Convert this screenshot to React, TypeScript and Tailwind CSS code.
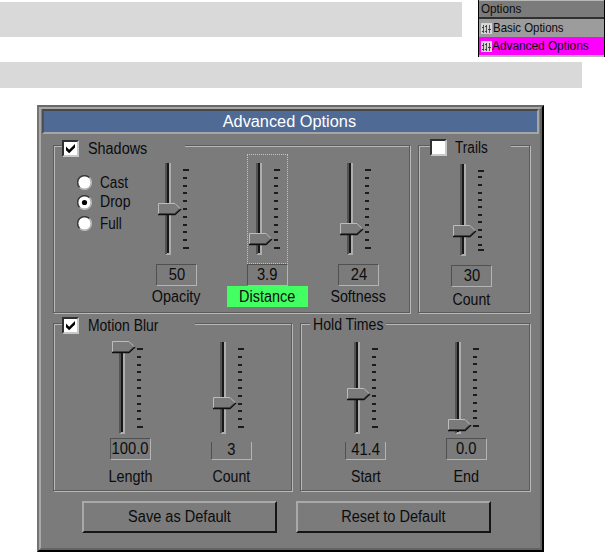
import type { ReactNode } from "react";
import clsx from "clsx";

const TICKS = [16, 24, 32, 39, 47, 55, 63, 71, 78, 86, 94];
const TRAIL_TICKS = [16, 22, 30, 38, 45, 52, 60, 67, 75, 82, 90, 95];
const END_TICKS = [16, 24, 31, 39, 47, 55, 62, 70, 78, 85, 93];

function Label({ children, className, small }: { children: ReactNode; className?: string; small?: boolean }) {
  return (
    <span
      className={clsx(
        "inline-block whitespace-pre",
        small ? "text-[13px] leading-4" : "text-[16px] leading-[18px]",
        className
      )}
    >
      {children}
    </span>
  );
}

function Slider({ thumb, ticks = TICKS }: { thumb: number; ticks?: number[] }) {
  return (
    <svg width="41" height="110" viewBox="0 0 41 110" shapeRendering="crispEdges" className="block shrink-0">
      <rect x="10" y="9" width="5" height="92" fill="#adadad" />
      <rect x="9" y="9" width="2" height="91" fill="#535353" />
      <rect x="11" y="9" width="2" height="90" fill="#181818" />
      {ticks.map((y, i) => {
        const end = i === 0 || i === ticks.length - 1;
        return <rect key={y} x={27} y={y - 1} width={end ? 6 : 4} height="1.5" fill="#1c1c1c" />;
      })}
      <g transform={`translate(2 ${thumb})`} shapeRendering="auto">
        <path d="M0 0H17L23 6L17 12H0Z" fill="#7b7b7b" />
        <path d="M.5 11V.5H17L22.5 6" fill="none" stroke="#bcbcbc" />
        <path d="M1 10.5H16.5L21.5 6" fill="none" stroke="#555" />
        <path d="M0 11.5H17L23 6" fill="none" stroke="#101010" strokeWidth="1.3" />
      </g>
    </svg>
  );
}

function Column({
  value,
  thumb,
  ticks,
  focused,
  clipped,
  short,
  className,
  children,
}: {
  value: string;
  thumb: number;
  ticks?: number[];
  focused?: boolean;
  clipped?: boolean;
  short?: boolean;
  className?: string;
  children: ReactNode;
}) {
  return (
    <div className={clsx("flex w-[91px] shrink-0 flex-col items-center", className)}>
      <div
        className={clsx(
          "w-[41px] shrink-0",
          short ? "h-[105px]" : "h-[110px]",
          focused && "outline outline-dotted outline-1 -outline-offset-1 outline-[#c4c4c4]"
        )}
      >
        <Slider thumb={thumb} ticks={ticks} />
      </div>
      <div
        className={clsx(
          "flex w-[41px] shrink-0 items-center justify-center border-r border-b border-l border-r-[#b4b4b4] border-b-[#b4b4b4] border-l-[#505050] bg-[#7b7b7b]",
          clipped ? "mt-1 h-[18px] pb-[2px]" : "h-[22px] border-t border-t-[#505050]"
        )}
      >
        <Label className="scale-x-[0.92]">{value}</Label>
      </div>
      {children}
    </div>
  );
}

function Group({ className, children }: { className?: string; children: ReactNode }) {
  return (
    <section
      className={clsx(
        "h-[168px] shrink-0 border border-[#5c5c5c] shadow-[1px_1px_0_#b8b8b8,inset_1px_1px_0_#b8b8b8]",
        className
      )}
    >
      {children}
    </section>
  );
}

function Check({ checked }: { checked?: boolean }) {
  return (
    <span className="flex size-[17px] shrink-0 items-center justify-center border-2 border-t-[#303030] border-r-[#c8c8c8] border-b-[#c8c8c8] border-l-[#303030] bg-white">
      {checked && (
        <svg width="11" height="11" viewBox="0 0 11 11">
          <path d="M1 3.5L4.2 6.8L10 1V4.5L4.2 10.3L1 7.2Z" fill="#000" />
        </svg>
      )}
    </span>
  );
}

function Radio({ checked, className, children }: { checked?: boolean; className: string; children: ReactNode }) {
  return (
    <label className={clsx("flex items-center gap-2", className)}>
      <svg width="15" height="15" viewBox="0 0 15 15" className="shrink-0">
        <circle cx="7.5" cy="7.5" r="6.3" fill="#fff" />
        <path d="M2.6 12.4A6.9 6.9 0 0 1 12.4 2.6" fill="none" stroke="#3a3a3a" strokeWidth="1.4" />
        <path d="M12.4 2.6A6.9 6.9 0 0 1 2.6 12.4" fill="none" stroke="#b4b4b4" strokeWidth="1.4" />
        {checked && <circle cx="7.5" cy="7.5" r="2.6" fill="#000" />}
      </svg>
      {children}
    </label>
  );
}

function MixerIcon() {
  return (
    <svg width="11" height="11" viewBox="0 0 11 11" shapeRendering="crispEdges" className="shrink-0">
      <rect width="11" height="11" fill="#d6d6d6" />
      <path d="M2.5 2V10M5.5 2V10M8.5 2V10" stroke="#555" />
      <path d="M1 4.5H3M4 3.5H6M7 6.5H10M1 8.5H3M4 8.5H6" stroke="#3c3c3c" />
    </svg>
  );
}

function PushButton({ children }: { children: ReactNode }) {
  return (
    <button className="flex h-8 w-[195px] items-center justify-center border-2 border-t-[#a9a9a9] border-r-[#151515] border-b-[#151515] border-l-[#a9a9a9] bg-[#7b7b7b]">
      {children}
    </button>
  );
}

function OptionsMenu() {
  return (
    <nav className="h-[57px] w-[127px] shrink-0 border-x border-black bg-[#b8b8b8] pt-px">
      <div className="flex h-[18px] items-center border-b-2 border-[#303030] bg-[#7b7b7b] pl-[2px]">
        <Label small className="origin-left scale-x-[0.9]">Options</Label>
      </div>
      <div className="flex h-[18px] items-center gap-px bg-[#9c9c9c] pl-[2px]">
        <MixerIcon />
        <Label small className="origin-left scale-x-[0.88]">Basic Options</Label>
      </div>
      <div className="flex h-[18px] w-[125px] items-center bg-[#ff00ff] pl-[2px]">
        <MixerIcon />
        <Label small className="origin-left scale-x-[0.91]">Advanced Options</Label>
      </div>
    </nav>
  );
}

export default function App() {
  return (
    <main className="h-[552px] w-[605px] overflow-hidden bg-white font-['Liberation_Sans',Arial,sans-serif] text-[#0c0c0c]">
      <div className="flex h-[62px] justify-between">
        <div className="mt-[2px] h-[35px] w-[462px] bg-[#d9d9d9]" />
        <OptionsMenu />
      </div>
      <div className="h-[26px] w-[582px] bg-[#d9d9d9]" />

      <div className="mt-[17px] ml-[37px] h-[447px] w-[507px] border-2 border-t-[#696969] border-r-black border-b-black border-l-[#747474] bg-[#7b7b7b]">
        <div className="h-[443px] border-2 border-t-[#a8a8a8] border-r-[#636363] border-b-[#636363] border-l-[#a8a8a8]">
          <div className="mx-px flex h-[25px] items-center justify-center border-2 border-t-[#484848] border-r-[#a5a5a5] border-b-[#a5a5a5] border-l-[#505050] bg-[#506a96] text-white">
            <Label className="scale-x-[1.02] pr-[2px]">Advanced Options</Label>
          </div>

          <div className="mt-[11px] ml-3 flex gap-2">
            <Group className="w-[357px]">
              <div className="-mt-[7px] ml-2 flex h-[18px] w-[123px] items-center gap-[9px] bg-[#7b7b7b]">
                <Check checked />
                <Label className="origin-left scale-x-90 pt-[2px]">Shadows</Label>
              </div>
              <div className="-mt-[3px] flex">
                <div className="w-[77px] shrink-0 pt-[19px] pl-[23px]">
                  <Radio className="h-[19px]">
                    <Label className="origin-left scale-x-[0.85]">Cast</Label>
                  </Radio>
                  <Radio checked className="h-5">
                    <Label className="origin-left scale-x-[0.88]">Drop</Label>
                  </Radio>
                  <Radio className="h-[23px]">
                    <Label className="origin-left scale-x-[0.84]">Full</Label>
                  </Radio>
                </div>
                <Column value="50" thumb={49}>
                  <Label className="mt-[2px] scale-x-90">Opacity</Label>
                </Column>
                <Column value="3.9" thumb={79} focused>
                  <div className="flex h-[21px] w-[81px] justify-center bg-[#42ff62] pt-[2px]">
                    <Label className="scale-x-90">Distance</Label>
                  </div>
                </Column>
                <Column value="24" thumb={69}>
                  <Label className="mt-[2px] scale-x-[0.89]">Softness</Label>
                </Column>
              </div>
            </Group>
            <Group className="w-[112px]">
              <div className="-mt-2 ml-[11px] flex h-[18px] w-[81px] items-center gap-2 bg-[#7b7b7b]">
                <Check />
                <Label className="origin-left scale-x-[0.85] pt-px">Trails</Label>
              </div>
              <div className="-mt-px flex">
                <Column value="30" thumb={70} ticks={TRAIL_TICKS} className="ml-[7px]">
                  <Label className="mt-1 scale-x-[0.88]">Count</Label>
                </Column>
              </div>
            </Group>
          </div>

          <div className="mt-[10px] ml-3 flex gap-2">
            <Group className="w-[239px]">
              <div className="-mt-2 ml-2 flex h-[18px] w-[133px] items-center gap-[9px] bg-[#7b7b7b]">
                <Check checked />
                <Label className="origin-left scale-x-[0.87] pt-px">Motion Blur</Label>
              </div>
              <div className="-mt-px flex pl-[31px]">
                <Column value="100.0" thumb={8} short>
                  <Label className="mt-2 scale-x-90">Length</Label>
                </Column>
                <Column value="3" thumb={64} short clipped className="ml-[10px]">
                  <Label className="mt-2 scale-x-[0.88]">Count</Label>
                </Column>
              </div>
            </Group>
            <Group className="w-[230px]">
              <div className="-mt-2 ml-[9px] flex h-[18px] w-[76px] bg-[#7b7b7b] pl-[3px]">
                <Label className="origin-left scale-x-[0.88]">Hold Times</Label>
              </div>
              <div className="-mt-px flex pl-[19px]">
                <Column value="41.4" thumb={55} short clipped>
                  <Label className="mt-2 scale-x-[0.88]">Start</Label>
                </Column>
                <Column value="0.0" thumb={86} ticks={END_TICKS} short className="ml-[10px]">
                  <Label className="mt-2 scale-x-90">End</Label>
                </Column>
              </div>
            </Group>
          </div>

          <div className="mt-[10px] ml-[41px] flex gap-[19px]">
            <PushButton>
              <Label className="scale-x-[0.91]">Save as Default</Label>
            </PushButton>
            <PushButton>
              <Label className="scale-x-[0.91]">Reset to Default</Label>
            </PushButton>
          </div>
        </div>
      </div>
    </main>
  );
}
